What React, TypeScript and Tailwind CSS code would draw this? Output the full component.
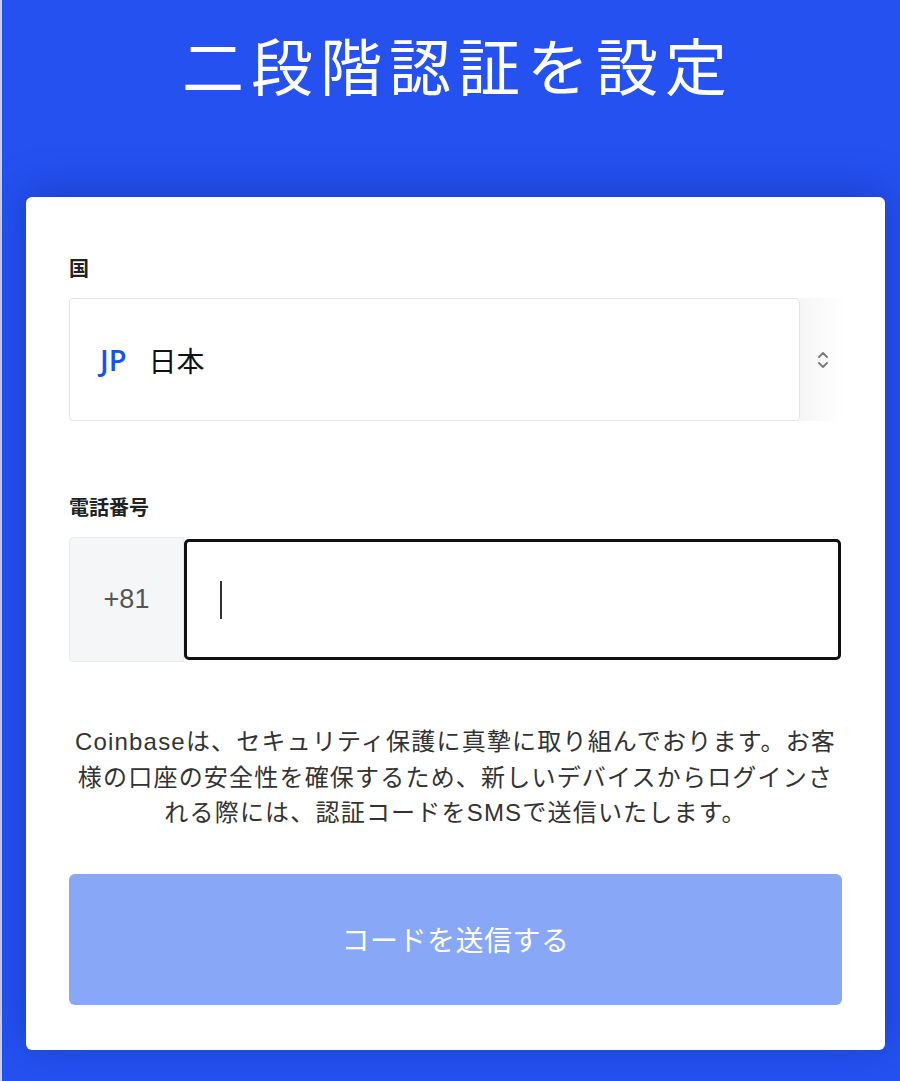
import React from 'react';

const App: React.FC = () => {
  return (
    <div
      className="min-h-[1081px] w-[900px] bg-[#2451f0] border-l-2 border-[#c9d2ea] pt-[26px] pb-[31px]"
      style={{ fontFamily: '"Noto Sans CJK JP", sans-serif' }}
    >
      <h1 className="pl-[14px] text-center text-white text-[62px] leading-[76px] tracking-[7px] font-normal">
        二段階認証を設定
      </h1>

      <div className="mt-[95px] ml-[24px] w-[859px] bg-white rounded-[6px] shadow-[0_-6px_40px_rgba(10,30,120,0.35)] pl-[43px] pr-[43px] pt-[58px] pb-[45px]">
        {/* Country */}
        <label className="block text-[20px] leading-[26px] font-bold text-[#222]">国</label>
        <div className="mt-[17px] flex">
          <div className="flex-1 h-[123px] border border-[#e3e4e6] rounded-[4px] flex items-center pl-[30px]">
            <span className="text-[#1652f0] text-[29px] font-semibold" style={{ fontFamily: '"Open Sans", sans-serif' }}>
              JP
            </span>
            <span className="ml-[22px] text-[28px] text-[#111]">日本</span>
          </div>
          <div className="w-[46px] mr-[-4px] h-[123px] bg-gradient-to-r from-[#f6f6f7] to-white flex items-center justify-center">
            <svg width="14" height="24" viewBox="0 0 14 24" fill="none" stroke="#7a7a7a" strokeWidth="1.8" strokeLinecap="round" strokeLinejoin="round">
              <path d="M3 9 L7 5 L11 9" />
              <path d="M3 15 L7 19 L11 15" />
            </svg>
          </div>
        </div>

        {/* Phone */}
        <label className="block mt-[73px] text-[20px] leading-[26px] font-bold text-[#222]">電話番号</label>
        <div className="mt-[17px] flex h-[125px]">
          <div className="w-[115px] bg-[#f5f6f8] border border-[#e8e9ec] rounded-l-[4px] flex items-center justify-center">
            <span className="text-[27px] text-[#555]" style={{ fontFamily: '"Liberation Sans", sans-serif' }}>
              +81
            </span>
          </div>
          <div className="flex-1 my-[2px] mr-[1px] border-[3px] border-[#111] rounded-[5px] flex items-center pl-[33px]">
            <div className="w-[2px] h-[38px] bg-[#333]" />
          </div>
        </div>

        {/* Notice */}
        <p
          className="mt-[62px] text-center text-[24px] leading-[35.5px] tracking-[1.2px] text-[#333] whitespace-nowrap"
          style={{ fontFamily: '"Liberation Sans", "Noto Sans CJK JP", sans-serif' }}
        >
          Coinbaseは、セキュリティ保護に真摯に取り組んでおります。お客
          <br />
          様の口座の安全性を確保するため、新しいデバイスからログインさ
          <br />
          れる際には、認証コードをSMSで送信いたします。
        </p>

        <button
          type="button"
          disabled
          className="mt-[43px] w-full h-[131px] rounded-[6px] bg-[#88a7f6] text-white text-[28px] tracking-[0.5px]"
        >
          コードを送信する
        </button>
      </div>
    </div>
  );
};

export default App;
